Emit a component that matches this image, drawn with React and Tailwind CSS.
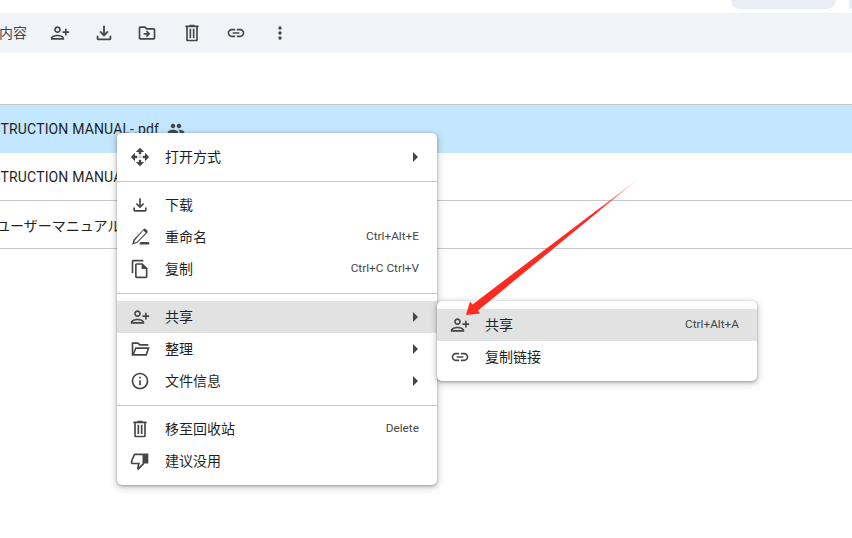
import React from "react";
import { MdOutlineFileDownload, MdOutlineDriveFileMove, MdLink, MdMoreVert, MdPeople, MdOutlineFileCopy, MdInfoOutline } from "react-icons/md";

const font = { fontFamily: '"Roboto","Noto Sans CJK SC",sans-serif' };

const PersonAdd = ({ className }) => (
  <svg viewBox="0 0 24 24" className={className} fill="currentColor">
    <g transform="translate(24 0) scale(-1 1)">
      <path d="M15 12c2.21 0 4-1.79 4-4s-1.79-4-4-4-4 1.79-4 4 1.79 4 4 4zm0-6c1.1 0 2 .9 2 2s-.9 2-2 2-2-.9-2-2 .9-2 2-2zm0 8c-2.67 0-8 1.34-8 4v2h16v-2c0-2.66-5.33-4-8-4zm-6 4c.22-.72 3.31-2 6-2 2.7 0 5.8 1.29 6 2H9zm-3-3v-3h3v-2H6V7H4v3H1v2h3v3h2z" />
    </g>
  </svg>
);
const Trash = ({ className }) => (
  <svg viewBox="0 0 24 24" className={className} fill="currentColor">
    <path d="M15 3V2H9v1H4v2h1v15c0 1.1.9 2 2 2h10c1.1 0 2-.9 2-2V5h1V3h-5zm2 17H7V5h10v15zM9 7h2v11H9V7zm4 0h2v11h-2V7z" />
  </svg>
);
const Move = ({ className }) => (
  <svg viewBox="0 0 24 24" className={className} fill="currentColor">
    <path d="M12 1l5 5h-3.5v2.5h-3V6H7l5-5zM12 23l-5-5h3.5v-2.5h3V18H17l-5 5zM1 12l5-5v3.5h2.5v3H6V17l-5-5zM23 12l-5 5v-3.5h-2.5v-3H18V7l5 5z" />
    <path d="M11.2 8h1.6v8h-1.6zM8 11.2h8v1.6H8z" opacity="0.25" />
  </svg>
);
const Rename = ({ className }) => (
  <svg viewBox="0 0 24 24" className={className} fill="currentColor">
    <path d="M16.3 2.6a2 2 0 0 1 2.8 0l1.6 1.6a2 2 0 0 1 0 2.8L8.6 19.2 2.5 21l1.8-6.1L16.3 2.6zM6 15.8l-.9 3 3-.9L18.9 7 16 4.2 6 15.8z" />
    <path d="M12.5 18H23v3H11z" />
  </svg>
);
const FolderOpen = ({ className }) => (
  <svg viewBox="0 0 24 24" className={className} fill="currentColor">
    <path d="M2 4h8l2 2h10v2H11.2l-2-2H4v10.2L6.3 10H23.5l-3.3 10H2V4zm5.6 8L5 18h13.8l2-6H7.6z" />
  </svg>
);
const ThumbDown = ({ className }) => (
  <svg viewBox="0 0 24 24" className={className} fill="currentColor">
    <path d="M15 3H6c-.83 0-1.54.5-1.84 1.22l-3.02 7.05c-.09.23-.14.47-.14.73v2c0 1.1.9 2 2 2h6.31l-.95 4.57-.03.32c0 .41.17.79.44 1.06L9.83 23l6.59-6.59c.36-.36.58-.86.58-1.41V5c0-1.1-.9-2-2-2zm0 12-4.34 4.34L12 14H3v-2l3-7h9v10z" />
    <path d="M16 3h6v12h-6z" />
  </svg>
);
const Arrow = () => <span className="w-0 h-0 -ml-[1px] mr-[1px] border-y-[5px] border-y-transparent border-l-[5px] border-l-[#444746]" />;

const Item = ({ icon: I, label, shortcut, arrow, active }) => (
  <div className={`h-8 flex items-center pl-[13px] pr-[18px] ${active ? "bg-[#e2e2e2]" : ""}`}>
    <I className="w-5 h-5 text-[#444746] shrink-0" />
    <span className="ml-[15px] text-[14px] text-[#1f1f1f] flex-1 whitespace-nowrap">{label}</span>
    {shortcut && <span className="text-[11.8px] text-[#444746]">{shortcut}</span>}
    {arrow && <Arrow />}
  </div>
);
const Sep = () => <div className="h-px bg-[#c7c7c7] mt-2 mb-[7px]" />;

export default function App() {
  return (
    <div className="relative w-[852px] h-[538px] overflow-hidden bg-white" style={font}>
      <div className="h-[13px] flex justify-end">
        <div className="h-[9px] w-[105px] bg-[#e9eef6] rounded-b-[12px] mr-[13px]" />
        <div className="h-[9px] w-[3px] bg-[#e9eef6] rounded-bl-[3px]" />
      </div>
      <div className="h-10 bg-[#f0f4f9] flex items-center text-[#444746]">
        <span className="-ml-px text-[14px] w-[49px] whitespace-nowrap">内容</span>
        <PersonAdd className="w-5 h-5 ml-[2px]" />
        <MdOutlineFileDownload className="w-[22px] h-[22px] ml-[23px]" />
        <MdOutlineDriveFileMove className="w-5 h-5 ml-[22px]" />
        <Trash className="w-5 h-5 ml-[25px]" />
        <MdLink className="w-5 h-5 ml-[24px]" />
        <MdMoreVert className="w-5 h-5 ml-[24px]" />
      </div>
      <div className="h-[51px]" />
      <div className="border-t border-[#c7c7c7] h-[49px] bg-[#c2e7ff] flex items-center text-[14px] tracking-[0.15px] text-[#1f1f1f] whitespace-nowrap">
        <span className="-ml-[22px]">INSTRUCTION MANUAL-.pdf</span>
        <MdPeople className="w-[18px] h-[18px] ml-2 text-[#444746]" />
      </div>
      <div className="h-[48px] pt-px border-b border-[#c7c7c7] flex items-center text-[14px] tracking-[0.15px] text-[#1f1f1f] whitespace-nowrap">
        <span className="-ml-[22px]">INSTRUCTION MANUAL</span>
      </div>
      <div className="h-[48px] pt-[3px] border-b border-[#c7c7c7] flex items-center text-[14px] text-[#1f1f1f] whitespace-nowrap">
        <span className="-ml-[4px]">ユーザーマニュアル</span>
      </div>

      <div className="absolute left-[117px] top-[133px] w-[320px] py-2 bg-white rounded-[5px] shadow-[0_2px_6px_2px_rgba(60,64,67,0.18),0_1px_3px_rgba(60,64,67,0.45)]">
        <Item icon={Move} label="打开方式" arrow />
        <Sep />
        <Item icon={MdOutlineFileDownload} label="下载" />
        <Item icon={Rename} label="重命名" shortcut="Ctrl+Alt+E" />
        <Item icon={MdOutlineFileCopy} label="复制" shortcut="Ctrl+C Ctrl+V" />
        <Sep />
        <Item icon={PersonAdd} label="共享" arrow active />
        <Item icon={FolderOpen} label="整理" arrow />
        <Item icon={MdInfoOutline} label="文件信息" arrow />
        <Sep />
        <Item icon={Trash} label="移至回收站" shortcut="Delete" />
        <Item icon={ThumbDown} label="建议没用" />
      </div>

      <div className="absolute left-[437px] top-[301px] w-[320px] py-2 bg-white rounded-[5px] shadow-[0_2px_6px_2px_rgba(60,64,67,0.18),0_1px_3px_rgba(60,64,67,0.45)]">
        <Item icon={PersonAdd} label="共享" shortcut="Ctrl+Alt+A" active />
        <Item icon={MdLink} label="复制链接" />
      </div>

      <svg className="absolute left-0 top-0 pointer-events-none" width="852" height="538" viewBox="0 0 852 538">
        <defs>
          <linearGradient id="a" gradientUnits="userSpaceOnUse" x1="640" y1="178" x2="595" y2="213">
            <stop offset="0" stopColor="#ff2a20" stopOpacity="0.15" />
            <stop offset="1" stopColor="#ff2a20" />
          </linearGradient>
        </defs>
        <path d="M640 177.5 L478 310.5 L480 313.5 L466 315 L470 301.5 L472.5 304.5 Z" fill="url(#a)" />
      </svg>
    </div>
  );
}
